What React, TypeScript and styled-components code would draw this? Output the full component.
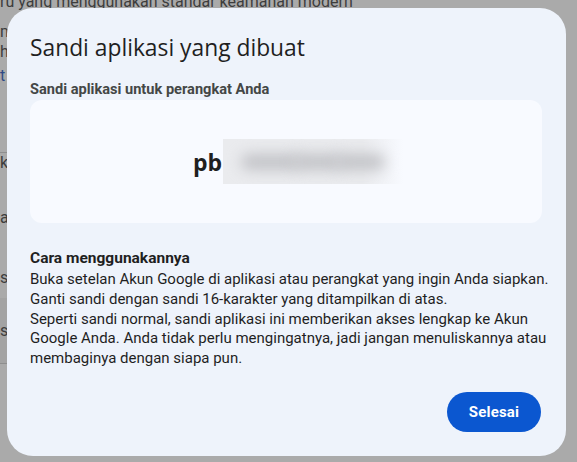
import React from "react";
import styled, { createGlobalStyle } from "styled-components";

const Global = createGlobalStyle`
  html, body { margin: 0; padding: 0; }
  body {
    width: 577px;
    height: 462px;
    overflow: hidden;
    background: #aaaaaa;
    font-family: Roboto, "Liberation Sans", Arial, sans-serif;
  }
`;

const Page = styled.div`
  position: relative;
  width: 577px;
  height: 462px;
  overflow: hidden;
  background: #aaaaaa;
`;

const PageColumn = styled.div`
  display: flex;
  flex-direction: column;
  margin-top: -8px;
  width: 577px;
  color: #3d3d3d;
  font-size: 16px;
`;

const PageRow = styled.div<{ $h: number; $color?: string; $rule?: boolean; $band?: boolean }>`
  height: ${(p) => p.$h}px;
  line-height: 20px;
  white-space: nowrap;
  box-sizing: border-box;
  color: ${(p) => p.$color || "#3d3d3d"};
  width: ${(p) => (p.$rule || p.$band ? "20px" : "auto")};
  border-bottom: ${(p) => (p.$rule ? "1px solid #8e8e8e" : "none")};
  background: ${(p) => (p.$band ? "#a3a3a3" : "transparent")};
  display: flex;
  align-items: ${(p) => (p.$band ? "center" : "flex-start")};
`;

const Dialog = styled.div`
  position: absolute;
  left: 7px;
  top: 8px;
  width: 559px;
  height: 448px;
  box-sizing: border-box;
  background: #eef3fb;
  border-radius: 26px;
  padding: 26px 24px 24px 23px;
  display: flex;
  flex-direction: column;
  color: #1f1f1f;
  & > * { flex-shrink: 0; }
`;

const Title = styled.h1`
  margin: 0;
  font-family: "Open Sans", Roboto, sans-serif;
  font-weight: 400;
  font-size: 22.8px;
  line-height: 28px;
  color: #1f1f1f;
`;

const Label = styled.div`
  margin-top: 17px;
  font-size: 14.6px;
  font-weight: 700;
  line-height: 20px;
  color: #444746;
`;

const Card = styled.div`
  margin-top: 1px;
  height: 123px;
  background: #f8faff;
  border-radius: 12px;
  display: flex;
  align-items: center;
  justify-content: center;
`;

const Password = styled.div`
  display: flex;
  align-items: center;
  font-family: "Open Sans", Roboto, sans-serif;
  font-weight: 700;
  font-size: 23px;
  color: #1f1f1f;
  margin-left: 24px;
`;

const Blur = styled.span`
  position: relative;
  display: inline-block;
  width: 180px;
  height: 45px;
  margin-left: 1px;
  overflow: hidden;
  background: linear-gradient(to right, #eaebee 0%, #eaebee 78%, #f8faff 100%);
`;

const Blob = styled.span<{ $left: number; $w: number }>`
  position: absolute;
  top: 15px;
  left: ${(p) => p.$left}px;
  width: ${(p) => p.$w}px;
  height: 16px;
  border-radius: 8px;
  background: #c2c3c7;
  filter: blur(7px);
`;

const HowTitle = styled.div`
  margin-top: 25px;
  font-size: 15.5px;
  font-weight: 700;
  line-height: 20px;
  color: #1f1f1f;
`;

const Body = styled.p`
  margin: 2px 0 0;
  font-size: 15px;
  line-height: 19.75px;
  white-space: nowrap;
  color: #1f1f1f;
`;

const Footer = styled.div`
  margin-top: auto;
  display: flex;
  justify-content: flex-end;
  padding-right: 1px;
`;

const Button = styled.button`
  height: 40px;
  width: 94px;
  border: none;
  border-radius: 20px;
  background: #0b57d0;
  color: #ffffff;
  font-family: Roboto, sans-serif;
  font-weight: 700;
  font-size: 15px;
  letter-spacing: 0.2px;
  cursor: pointer;
`;

export default function App() {
  return (
    <>
      <Global />
      <Page>
        <PageColumn aria-hidden>
          <PageRow $h={30}>ru yang menggunakan standar keamanan modern</PageRow>
          <PageRow $h={20}>m</PageRow>
          <PageRow $h={24}>h</PageRow>
          <PageRow $h={57} $color="#2f4a86">t</PageRow>
          <PageRow $h={30} $rule />
          <PageRow $h={55}>k</PageRow>
          <PageRow $h={60}>a</PageRow>
          <PageRow $h={30}>sa</PageRow>
          <PageRow $h={66} $band $rule>s</PageRow>
        </PageColumn>
        <Dialog role="dialog" aria-label="Sandi aplikasi yang dibuat">
          <Title>Sandi aplikasi yang dibuat</Title>
          <Label>Sandi aplikasi untuk perangkat Anda</Label>
          <Card>
            <Password>
              pb
              <Blur aria-hidden>
                <Blob $left={18} $w={60} />
                <Blob $left={70} $w={50} />
                <Blob $left={112} $w={50} />
              </Blur>
            </Password>
          </Card>
          <HowTitle>Cara menggunakannya</HowTitle>
          <Body>
            Buka setelan Akun Google di aplikasi atau perangkat yang ingin Anda siapkan.
            <br />
            Ganti sandi dengan sandi 16-karakter yang ditampilkan di atas.
            <br />
            Seperti sandi normal, sandi aplikasi ini memberikan akses lengkap ke Akun
            <br />
            Google Anda. Anda tidak perlu mengingatnya, jadi jangan menuliskannya atau
            <br />
            membaginya dengan siapa pun.
          </Body>
          <Footer>
            <Button>Selesai</Button>
          </Footer>
        </Dialog>
      </Page>
    </>
  );
}
